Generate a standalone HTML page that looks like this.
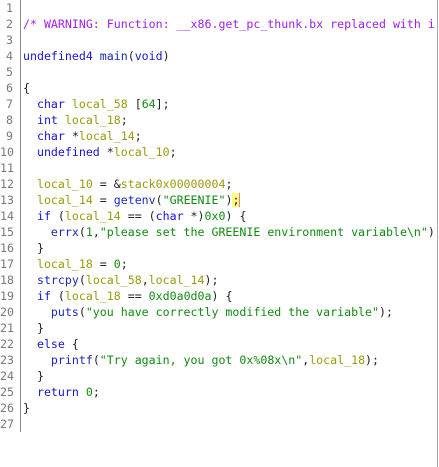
<!DOCTYPE html><html><head><style>
body{margin:0;width:439px;height:467px;background:#fff;overflow:hidden;position:relative;font-family:"DejaVu Sans Mono",monospace;font-size:11.6px}
#g{position:absolute;left:0;top:0;width:13px;text-align:right;color:#777}
#c{position:absolute;left:23px;top:0;width:414px;overflow:hidden;color:#222;white-space:pre}
.l{height:16px;line-height:16px}
#d{position:absolute;left:20px;top:0;width:1px;height:432px;background:#888}
#r{position:absolute;left:437px;top:0;width:1px;height:467px;background:#aaa}
.k{color:#1515d0}.f{color:#1a2ab0}.v{color:#9a9a10}.n{color:#108a10}.s{color:#108a10}.m{color:#a020e8}
.cur{background:#ffff80;box-shadow:1px 0 0 #f08080}
</style></head><body>
<div id="d"></div><div id="r"></div>
<div id="g"><div class="l">1</div><div class="l">2</div><div class="l">3</div><div class="l">4</div><div class="l">5</div><div class="l">6</div><div class="l">7</div><div class="l">8</div><div class="l">9</div><div class="l">10</div><div class="l">11</div><div class="l">12</div><div class="l">13</div><div class="l">14</div><div class="l">15</div><div class="l">16</div><div class="l">17</div><div class="l">18</div><div class="l">19</div><div class="l">20</div><div class="l">21</div><div class="l">22</div><div class="l">23</div><div class="l">24</div><div class="l">25</div><div class="l">26</div><div class="l">27</div></div>
<div id="c"><div class="l"> </div><div class="l"><span class="m">/* WARNING: Function: __x86.get_pc_thunk.bx replaced with i</span></div><div class="l"> </div><div class="l"><span class="k">undefined4</span> <span class="f">main</span>(<span class="k">void</span>)</div><div class="l"> </div><div class="l">{</div><div class="l">  <span class="k">char</span> <span class="v">local_58</span> [<span class="n">64</span>];</div><div class="l">  <span class="k">int</span> <span class="v">local_18</span>;</div><div class="l">  <span class="k">char</span> *<span class="v">local_14</span>;</div><div class="l">  <span class="k">undefined</span> *<span class="v">local_10</span>;</div><div class="l"> </div><div class="l">  <span class="v">local_10</span> = &amp;<span class="v">stack0x00000004</span>;</div><div class="l">  <span class="v">local_14</span> = <span class="f">getenv</span>(<span class="s">"GREENIE"</span>)<span class="cur">;</span></div><div class="l">  <span class="k">if</span> (<span class="v">local_14</span> == (<span class="k">char</span> *)<span class="n">0x0</span>) {</div><div class="l">    <span class="f">errx</span>(<span class="n">1</span>,<span class="s">"please set the GREENIE environment variable\n"</span>);</div><div class="l">  }</div><div class="l">  <span class="v">local_18</span> = <span class="n">0</span>;</div><div class="l">  <span class="f">strcpy</span>(<span class="v">local_58</span>,<span class="v">local_14</span>);</div><div class="l">  <span class="k">if</span> (<span class="v">local_18</span> == <span class="n">0xd0a0d0a</span>) {</div><div class="l">    <span class="f">puts</span>(<span class="s">"you have correctly modified the variable"</span>);</div><div class="l">  }</div><div class="l">  <span class="k">else</span> {</div><div class="l">    <span class="f">printf</span>(<span class="s">"Try again, you got 0x%08x\n"</span>,<span class="v">local_18</span>);</div><div class="l">  }</div><div class="l">  <span class="k">return</span> <span class="n">0</span>;</div><div class="l">}</div><div class="l"> </div></div>
</body></html>
